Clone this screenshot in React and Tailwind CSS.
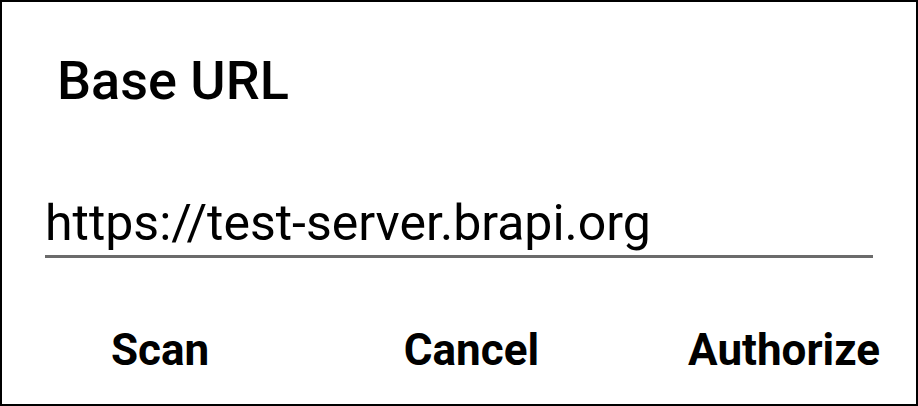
export default function App() {
  return (
    <div className="w-[918px] h-[406px] bg-white border-2 border-black flex flex-col" style={{ fontFamily: "Roboto, sans-serif" }}>
      <div className="pl-[55px] pt-[47px] text-[54px] leading-[64px] font-medium text-black">Base URL</div>
      <div className="ml-[43px] mr-[43px] mt-[78px] border-b-[3px] border-[#6b6b6b] text-[50px] leading-[64px] text-black whitespace-nowrap">
        https://test-server.brapi.org
      </div>
      <div className="flex items-center mt-[64px] pl-[109px] pr-[36px] text-[44px] leading-[56px] font-bold text-black">
        <span>Scan</span>
        <span className="flex-1"></span>
        <span>Cancel</span>
        <span className="ml-[149px]">Authorize</span>
      </div>
    </div>
  );
}
